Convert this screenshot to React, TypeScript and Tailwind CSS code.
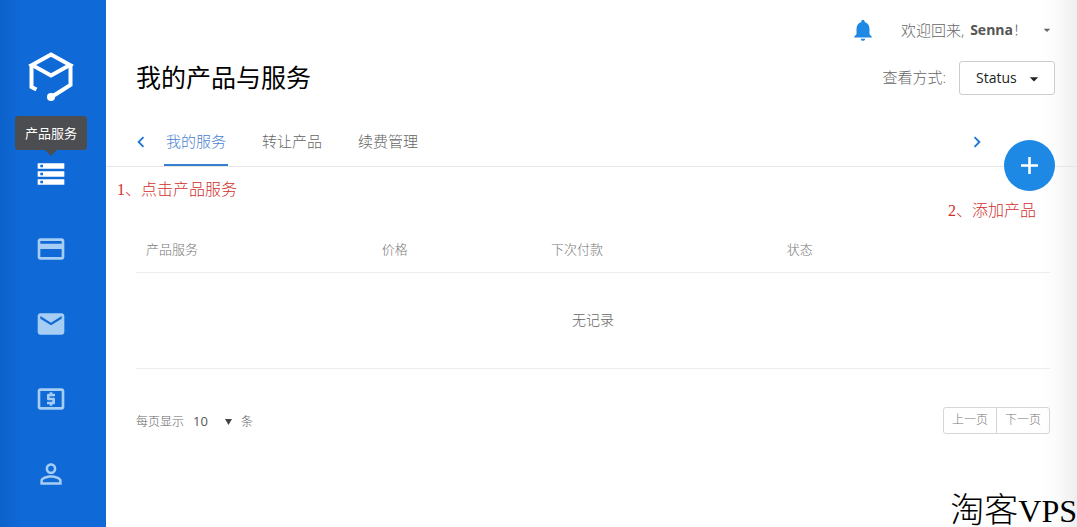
import React from "react";
import {
  MdArrowDropDown,
  MdChevronLeft,
  MdChevronRight,
  MdEmail,
  MdLocalAtm,
  MdNotifications,
  MdPayment,
  MdPersonOutline,
  MdStorage,
} from "react-icons/md";

const navItems = [
  { label: "产品服务", Icon: MdStorage },
  { label: "账单", Icon: MdPayment },
  { label: "邮件", Icon: MdEmail },
  { label: "财务", Icon: MdLocalAtm },
  { label: "账户", Icon: MdPersonOutline },
];

const tabs = ["我的服务", "转让产品", "续费管理"];

function Logo() {
  return (
    <svg viewBox="0 0 46 52" className="h-[52px] w-[46px]" fill="none" stroke="white" strokeWidth="4" aria-hidden="true">
      <path d="M23 4.500 42 15 23 25.500 4 15Z" />
      <path d="M3.500 14V37L8.500 39.500M42.500 14V35L25 46" />
      <circle cx="23" cy="47" r="4" fill="white" stroke="none" />
    </svg>
  );
}

function Sidebar() {
  return (
    <aside className="flex w-[106px] shrink-0 flex-col items-center bg-[#0f69d7] bg-linear-to-r from-[#0c62cb] to-[#0f69d7] to-20% pt-[50px] pr-1">
      <a href="#" aria-label="首页">
        <Logo />
      </a>
      <nav className="mt-[34px] flex flex-col">
        {navItems.map(({ label, Icon }, i) => (
          <a
            key={label}
            href="#"
            aria-label={label}
            className={
              i === 0
                ? "relative flex h-[75px] items-center justify-center text-white"
                : "flex h-[75px] items-center justify-center text-[#a6cdf4]"
            }
          >
            <Icon size={32} />
            {i === 0 && (
              <span className="absolute -top-5 left-1/2 -translate-x-1/2 rounded-[3px] bg-[#4c4d50] px-[10px] text-[13px] leading-[34px] whitespace-nowrap text-white">
                {label}
                <span className="absolute top-full left-1/2 -translate-x-1/2 border-x-[6px] border-t-[6px] border-x-transparent border-t-[#4c4d50]" />
              </span>
            )}
          </a>
        ))}
      </nav>
    </aside>
  );
}

function Header() {
  return (
    <header className="pr-[22px] pl-[30px]">
      <div className="flex h-[60px] items-center justify-end">
        <button type="button" aria-label="通知" className="mr-[25px] text-[#1e88e5]">
          <MdNotifications size={26} />
        </button>
        <button type="button" className="flex items-center text-[15px] font-light text-[#666]">
          欢迎回来,
          <strong className="ml-1.5 text-sm font-bold text-[#555]">Senna</strong>
          <span className="text-sm">！</span>
          <MdArrowDropDown size={16} className="ml-3" />
        </button>
      </div>
      <div className="flex h-[35px] items-center justify-between">
        <h1 className="text-[25px] text-black">我的产品与服务</h1>
        <div className="flex items-center gap-[13px]">
          <label htmlFor="view" className="text-[15px] font-light text-[#666]">
            查看方式:
          </label>
          <div className="relative">
            <select
              id="view"
              className="block h-[34px] w-24 appearance-none rounded-[3px] border border-[#ccc] bg-white pl-4 text-sm text-[#222]"
            >
              <option>Status</option>
            </select>
            <MdArrowDropDown size={20} className="pointer-events-none absolute top-2 right-[11px] text-[#222]" />
          </div>
        </div>
      </div>
    </header>
  );
}

function TabBar() {
  return (
    <div className="mt-[23px] flex h-[49px] items-stretch border-b border-[#e6e6e6] pr-[22px] pl-6">
      <button type="button" aria-label="上一个" className="text-[#1976d2]">
        <MdChevronLeft size={22} />
      </button>
      <div role="tablist" className="ml-3 flex flex-1 gap-8">
        {tabs.map((tab, i) => (
          <button
            key={tab}
            type="button"
            role="tab"
            aria-selected={i === 0}
            className={
              i === 0
                ? "border-y-2 border-t-transparent border-b-[#3480cf] px-0.5 pb-0.5 text-[15px] font-light text-[#4a7fd0]"
                : "border-y-2 border-transparent px-0.5 pb-0.5 text-[15px] font-light text-[#666]"
            }
          >
            {tab}
          </button>
        ))}
      </div>
      <button type="button" aria-label="下一个" className="mr-4 text-[#1976d2]">
        <MdChevronRight size={22} />
      </button>
      <button
        type="button"
        aria-label="添加产品"
        className="mt-[22px] flex h-[51px] w-[51px] shrink-0 items-center justify-center rounded-full bg-[#1e88e5] text-white"
      >
        <svg viewBox="0 0 17 17" className="h-[17px] w-[17px]" fill="currentColor" aria-hidden="true">
          <path d="M7.200 0h2.600v7.200H17v2.600H9.800V17H7.200V9.800H0V7.200h7.200z" />
        </svg>
      </button>
    </div>
  );
}

function ProductTable() {
  return (
    <table className="mt-1.5 w-full table-fixed text-left text-[13px] font-light text-[#777]">
      <thead>
        <tr className="h-[45px] border-b border-[#ececec]">
          <th className="w-[25.800%] px-[10px] font-light">产品服务</th>
          <th className="w-[18.500%] px-[10px] font-light">价格</th>
          <th className="w-[25.800%] px-[10px] font-light">下次付款</th>
          <th className="px-[10px] font-light">状态</th>
        </tr>
      </thead>
      <tbody>
        <tr className="h-24 border-b border-[#ececec]">
          <td colSpan={4} className="text-center text-sm text-[#666]">
            无记录
          </td>
        </tr>
      </tbody>
    </table>
  );
}

function TableFooter() {
  return (
    <div className="mt-[38px] flex items-center justify-between text-xs font-light text-[#666]">
      <div className="flex items-center gap-[9px] pt-1">
        <label htmlFor="size">每页显示</label>
        <div className="relative">
          <select id="size" className="block w-[39px] appearance-none bg-transparent text-[13px] font-normal text-[#555]">
            <option>10</option>
          </select>
          <svg viewBox="0 0 7 6" className="pointer-events-none absolute top-1.5 right-0 h-1.5 w-[7px]" fill="#444" aria-hidden="true">
            <path d="M0 0h7L3.500 6z" />
          </svg>
        </div>
        <span>条</span>
      </div>
      <div className="flex divide-x divide-[#d6d6d6] rounded-[3px] border border-[#d6d6d6]">
        <button type="button" className="h-[25px] px-2 text-[#777]">
          上一页
        </button>
        <button type="button" className="h-[25px] px-2 text-[#777]">
          下一页
        </button>
      </div>
    </div>
  );
}

export default function App() {
  return (
    <div className="relative flex min-h-screen bg-white font-['Open_Sans','Noto_Sans_CJK_SC',sans-serif]">
      <Sidebar />
      <main className="min-w-0 flex-1 bg-linear-to-l from-[#eeeeee] via-[#fbfbfb] via-[20px] to-white to-[40px]">
        <Header />
        <TabBar />
        <div className="flex flex-col pt-3 pr-[41px] pl-[11px] font-['Liberation_Serif','Noto_Sans_CJK_SC',serif] text-base leading-[21px] font-light text-[#d0302c]">
          <p>1、点击产品服务</p>
          <p className="self-end">2、添加产品</p>
        </div>
        <section className="pr-[27px] pl-[30px]">
          <ProductTable />
          <TableFooter />
        </section>
      </main>
      <p className="absolute right-0 bottom-0 flex items-baseline font-['Liberation_Serif','Noto_Sans_CJK_SC',serif] text-[34px] leading-8 font-light text-black">
        淘客<span className="text-[32px]">VPS</span>
      </p>
    </div>
  );
}
